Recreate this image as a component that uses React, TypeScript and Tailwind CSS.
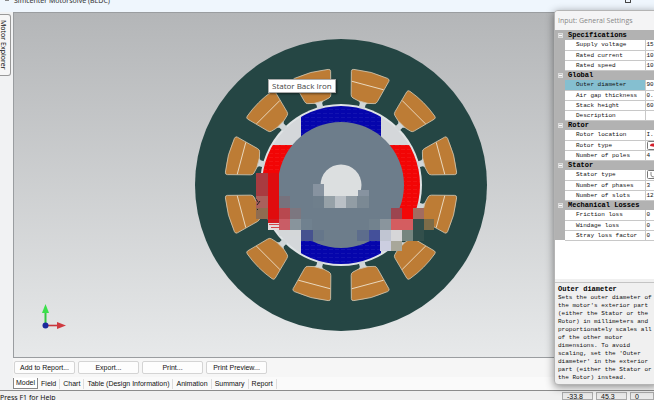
import { Fragment } from "react";

type Row = { label: string; value: string; icon?: "rotor" | "stator"; selected?: boolean };

const groups: { title: string; rows: Row[] }[] = [
  {
    title: "Specifications",
    rows: [
      { label: "Supply voltage", value: "15" },
      { label: "Rated current", value: "10" },
      { label: "Rated speed", value: "10" },
    ],
  },
  {
    title: "Global",
    rows: [
      { label: "Outer diameter", value: "90", selected: true },
      { label: "Air gap thickness", value: "0." },
      { label: "Stack height", value: "60" },
      { label: "Description", value: "" },
    ],
  },
  {
    title: "Rotor",
    rows: [
      { label: "Rotor location", value: "I." },
      { label: "Rotor type", value: "", icon: "rotor" },
      { label: "Number of poles", value: "4" },
    ],
  },
  {
    title: "Stator",
    rows: [
      { label: "Stator type", value: "", icon: "stator" },
      { label: "Number of phases", value: "3" },
      { label: "Number of slots", value: "12" },
    ],
  },
  {
    title: "Mechanical Losses",
    rows: [
      { label: "Friction loss", value: "0" },
      { label: "Windage loss", value: "0" },
      { label: "Stray loss factor", value: "0" },
    ],
  },
];

const slotAngles = [15, 45, 75, 105, 135, 165, 195, 225, 255, 285, 315, 345];

// x, y, width, height, fill, in motor coordinates (centre is 0,0)
const blocks: [number, number, number, number, string][] = [
  [-85, -12, 12, 23, "#a83b40"],
  [-73, -12, 11, 46, "#e00c0e"],
  [-85, 11, 12, 12, "#a9605c"],
  [-85, 23, 12, 11, "#8f6c51"],
  [-62, 11, 11, 12, "#77727d"],
  [-62, 23, 11, 11, "#b8484f"],
  [-51, 23, 11, 11, "#7c7780"],
  [-73, 34, 11, 4, "#d41a20"],
  [-62, 34, 11, 11, "#c95d66"],
  [-51, 34, 11, 11, "#88949c"],
  [-40, 34, 11, 11, "#70818f"],
  [-73, 38, 11, 7, "#e2dcdc"],
  [-62, 45, 22, 6, "#d4d7d9"],
  [-40, 45, 12, 11, "#46528f"],
  [-28, 45, 11, 11, "#65768a"],
  [-28, -1, 11, 12, "#8793a0"],
  [17, 5, 11, 6, "#8793a0"],
  [-28, 11, 11, 12, "#6f7f8c"],
  [-17, 11, 11, 12, "#96a1a8"],
  [-6, 11, 11, 12, "#bac0c6"],
  [5, 11, 11, 12, "#929da5"],
  [16, 11, 12, 12, "#7b8994"],
  [16, 45, 12, 11, "#5d6d8c"],
  [28, 45, 11, 11, "#44509a"],
  [28, 34, 11, 11, "#72828e"],
  [39, 34, 11, 11, "#8a959d"],
  [39, 45, 11, 11, "#c0c5d2"],
  [39, 56, 11, 10, "#cccee0"],
  [50, 45, 11, 11, "#d6d6d8"],
  [61, 45, 11, 11, "#76857f"],
  [50, 56, 11, 10, "#a8a79a"],
  [50, 23, 11, 11, "#9c4550"],
  [50, 34, 22, 11, "#d45d60"],
  [61, 23, 11, 11, "#f20808"],
  [72, 23, 11, 11, "#a26c60"],
  [72, 34, 11, 22, "#324f4b"],
  [83, 34, 10, 11, "#7d6c48"],
];

function Motor() {
  return (
    <svg viewBox="-147 -147 294 294" className="w-[294px] shrink-0" role="img" aria-label="Motor cross-section">
      <defs>
        <clipPath id="rotor">
          <circle r="79" />
        </clipPath>
        <pattern id="mesh" width="6" height="4" patternUnits="userSpaceOnUse">
          <path d="M0 0.5h4" stroke="#fff" strokeWidth="0.6" opacity="0.09" />
        </pattern>
      </defs>
      <circle r="146" fill="#254644" />
      <circle r="81" fill="#dfe3e5" />
      {slotAngles.map((angle) => (
        <g key={angle} transform={`rotate(${angle})`}>
          <path d="M-6 -87L-3 -84V-79H3V-84L6 -87Z" fill="#d0d6d8" />
          <path
            d="M-17.5 -115Q0 -118 17.5 -115Q20 -114.5 19.4 -112.5L13.6 -90Q13 -87.6 11 -87.2L5 -85.8H-5L-11 -87.2Q-13 -87.6 -13.6 -90L-19.4 -112.5Q-20 -114.5 -17.5 -115Z"
            fill="#bd7c35"
            stroke="#cfc4ae"
            strokeWidth="0.8"
          />
          <path d="M-16.5 -103H16.5" stroke="#ead9c0" strokeWidth="0.9" />
        </g>
      ))}
      <g clipPath="url(#rotor)">
        <circle r="79" fill="#d4d7da" />
        <path d="M-80 -40H80V40H-80Z" fill="#f20505" />
        <path d="M-40 -80H40V80H-40Z" fill="#0505ac" />
        <path d="M-80 -40H80V40H-80ZM-40 -80H40V80H-40Z" fill="url(#mesh)" />
      </g>
      <circle r="63" fill="#6d7d8b" />
      <circle r="20.5" fill="#dcdfe0" />
      <g shapeRendering="crispEdges">
        {blocks.map(([x, y, w, h, fill]) => (
          <rect key={`${x},${y}`} x={x} y={y} width={w} height={h} fill={fill} />
        ))}
      </g>
      <path d="M-72 39.5h10M-70 42.5h9" stroke="#d4474a" strokeWidth="1" />
      <path d="M-85 14l2 3M-84 20l3 -4M-84 24l1 1" stroke="#222" strokeWidth="1" />
    </svg>
  );
}

function Axes() {
  return (
    <svg viewBox="0 0 26 26" className="w-[26px]" role="img" aria-label="Axes">
      <path d="M4.5 21V8" stroke="#35c943" strokeWidth="2" />
      <path d="M4.5 0L8 9H1Z" fill="#3be04b" />
      <path d="M5 21.5H17" stroke="#c8353b" strokeWidth="1.6" />
      <path d="M25 21.5L16 18V25Z" fill="#cf3a40" />
      <circle cx="4.5" cy="21.5" r="3" fill="#1b2a9c" />
    </svg>
  );
}

const buttons = ["Add to Report...", "Export...", "Print...", "Print Preview..."];
const tabs = ["Field", "Chart", "Table (Design Information)", "Animation", "Summary", "Report"];

function SettingsPanel() {
  return (
    <section className="absolute top-[10px] left-[554px] right-[-4px] bottom-[15px] flex flex-col rounded-l-[4px] border border-[#b4b4b4] bg-[#f0f0f0] shadow-[0_2px_8px_rgba(0,0,0,0.45)] overflow-hidden">
      <h2 className="h-[19px] shrink-0 pl-[3px] bg-[#f4f4f5] font-['Open_Sans',sans-serif] text-[7px] leading-[19px] text-[#888]">
        Input: General Settings
      </h2>
      <div className="flex-1 bg-white">
        <table className="w-full table-fixed border-collapse font-['Liberation_Mono',monospace] text-[#111]">
          <colgroup>
            <col className="w-[10px]" />
            <col className="w-[80px]" />
            <col />
          </colgroup>
          <tbody>
            {groups.map((group) => (
              <Fragment key={group.title}>
                <tr className="h-[10px] bg-[#b2b2b2]">
                  <td className="p-0">
                    <button
                      aria-label={`Collapse ${group.title}`}
                      className="mx-auto flex size-[5px] items-center justify-center border border-[#dcdcdc] bg-[#c4c4c4]"
                    >
                      <span className="h-px w-[3px] bg-white" />
                    </button>
                  </td>
                  <th colSpan={2} className="p-0 pl-[3px] text-left text-[7px] leading-[9px] font-bold text-black">
                    {group.title}
                  </th>
                </tr>
                {group.rows.map((row) => (
                  <tr key={row.label} className="h-[10px]">
                    <td className="p-0 bg-[#b2b2b2]" />
                    <th
                      className={`p-0 pl-[11px] text-left text-[6px] leading-[9px] font-normal whitespace-nowrap border-r border-b border-[#c8c8c8] ${
                        row.selected ? "bg-[#85bfd0]" : "bg-white"
                      }`}
                    >
                      {row.label}
                    </th>
                    <td className="p-0 pl-px text-[6px] leading-[9px] border-b border-[#c8c8c8]">
                      {row.icon ? (
                        <svg viewBox="0 0 9 9" className="size-[9px]" aria-hidden="true">
                          <rect x="0.5" y="0.5" width="8" height="8" rx="1" fill="#fff" stroke="#777" />
                          {row.icon === "rotor" ? (
                            <path d="M3 5C3 2 6 2 9 3V6Z" fill="#d3202c" />
                          ) : (
                            <path d="M4 2v3q0 2 3 2" fill="none" stroke="#888" />
                          )}
                        </svg>
                      ) : (
                        row.value
                      )}
                    </td>
                  </tr>
                ))}
              </Fragment>
            ))}
          </tbody>
        </table>
      </div>
      <div className="mt-[3px] shrink-0 border-t border-[#c4c4c4] pt-[2px] pb-[2px] pl-[3px] font-['Liberation_Mono',monospace] text-[#111]">
        <h3 className="text-[7px] leading-[9px] font-bold text-black">Outer diameter</h3>
        <p className="text-[6px] leading-[8px] whitespace-nowrap">
          Sets the outer diameter of
          <br />
          the motor's exterior part
          <br />
          (either the Stator or the
          <br />
          Rotor) in millimeters and
          <br />
          proportionately scales all
          <br />
          of the other motor
          <br />
          dimensions. To avoid
          <br />
          scaling, set the 'Outer
          <br />
          diameter' in the exterior
          <br />
          part (either the Stator or
          <br />
          the Rotor) instead.
        </p>
      </div>
    </section>
  );
}

export default function App() {
  return (
    <div className="relative flex h-screen flex-col overflow-hidden bg-[#f0f0f0] font-['Liberation_Sans',sans-serif] text-[7px] text-[#111]">
      <header className="flex h-[12px] shrink-0 items-start bg-[#eff6fd] pl-[5px]">
        <span className="mr-[5px] h-px w-[4px] bg-[#888]" />
        <h1 className="flex-1 font-['Noto_Sans',sans-serif] leading-[2px] text-[#333]">
          Simcenter Motorsolve (BLDC)
        </h1>
        <button aria-label="Maximize" className="mr-[23px] h-[3px] w-[6px] rounded-b-[1px] border border-t-0 border-[#444]" />
      </header>
      <main className="flex min-h-0 flex-1">
        <aside className="w-[13px] shrink-0 bg-[#f1f2f3] pt-[2px]">
          <button className="flex h-[62px] w-[11px] items-center justify-center rounded-r-[3px] border border-l-0 border-[#999] bg-[#f6f6f6] pr-[4px] font-['Noto_Sans',sans-serif] text-[7px] leading-[8px] whitespace-nowrap [writing-mode:vertical-rl]">
            Motor Explorer
          </button>
        </aside>
        <div className="flex min-w-0 flex-1 flex-col">
          <div className="relative flex min-h-0 flex-1 items-center justify-center border border-[#9a9da0] bg-linear-to-b from-[#b4b6b8] to-[#e7e9ea] pl-[15px]">
            <Motor />
            <span className="absolute top-[66px] left-[254px] border border-[#aaa] bg-white px-[3px] font-['Open_Sans',sans-serif] text-[8px] leading-[12px] text-[#444] shadow-[1px_1px_2px_rgba(0,0,0,0.5)]">
              Stator Back Iron
            </span>
            <div className="absolute bottom-[27px] left-[27px]">
              <Axes />
            </div>
          </div>
          <div className="flex gap-[3px] bg-[#f6f6f6] py-[3px] pl-px">
            {buttons.map((label) => (
              <button
                key={label}
                className="h-[13px] w-[61px] rounded-[2px] border border-[#d4d4d4] bg-[#fdfdfd] leading-[11px] whitespace-nowrap"
              >
                {label}
              </button>
            ))}
          </div>
          <nav className="flex h-[13px] items-center bg-[#fafafa] leading-[10px] whitespace-nowrap">
            <a href="#model" className="border border-t-0 border-[#888] bg-white px-[2px]">
              Model
            </a>
            {tabs.map((label) => (
              <a key={label} href={`#${label}`} className="border-r border-[#ddd] px-[3px]">
                {label}
              </a>
            ))}
          </nav>
        </div>
      </main>
      <footer className="flex h-[10px] shrink-0 justify-between border-t border-[#8c8c8c] bg-[#f0f0f0] pt-px leading-[8px]">
        <span className="pt-[2px] font-['Noto_Sans',sans-serif]">Press F1 for Help</span>
        <div className="flex gap-[3px]">
          <span className="w-[31px] border border-[#aaa] bg-[#e9e9e9] pl-[4px]">-33.8</span>
          <span className="w-[31px] border border-[#aaa] bg-[#e9e9e9] pl-[4px]">45.3</span>
          <span className="w-[24px] border border-[#aaa] bg-[#e9e9e9] pl-[4px]">0</span>
        </div>
      </footer>
      <SettingsPanel />
    </div>
  );
}
